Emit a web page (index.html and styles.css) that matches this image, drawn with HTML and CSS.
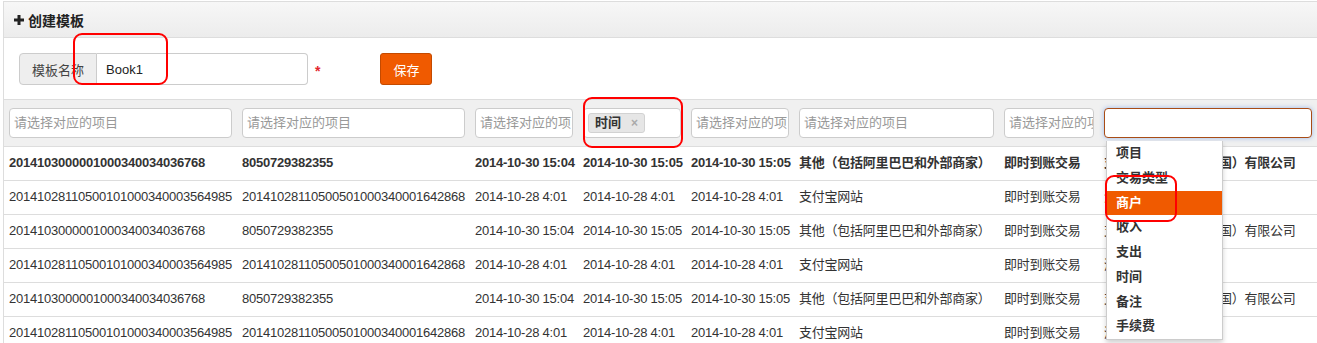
FILE: index.html
```html
<!DOCTYPE html>
<html lang="zh-CN">
<head>
    <meta charset="UTF-8">
    <meta name="viewport" content="width=device-width, initial-scale=1.0">
    <title>创建模板</title>
    <link rel="stylesheet" href="styles.css">
</head>
<body>
    <div class="panel">
        <div class="panel-heading">
            <svg class="icon-plus" width="10" height="10" viewBox="0 0 10 10"><path d="M3.5 0h3v3.5H10v3H6.5V10h-3V6.5H0v-3h3.5z" fill="#222"/></svg>
            <span>创建模板</span>
        </div>
        <div class="panel-body">
            <div class="form-row">
                <div class="input-group">
                    <span class="addon">模板名称</span>
                    <div class="name-input">Book1</div>
                </div>
                <span class="required">*</span>
                <button class="btn-save">保存</button>
            </div>
        </div>

        <table class="grid">
            <colgroup>
                <col style="width:233px">
                <col style="width:233px">
                <col style="width:108px">
                <col style="width:108px">
                <col style="width:108px">
                <col style="width:205px">
                <col style="width:100px">
                <col style="width:218px">
                <col style="width:100px">
            </colgroup>
            <thead>
                <tr class="filters">
                    <th><div class="filter"><span class="ph">请选择对应的项目</span></div></th>
                    <th><div class="filter"><span class="ph">请选择对应的项目</span></div></th>
                    <th><div class="filter"><span class="ph">请选择对应的项目</span></div></th>
                    <th><div class="filter"><span class="tag">时间<span class="tag-x">×</span></span></div></th>
                    <th><div class="filter"><span class="ph">请选择对应的项目</span></div></th>
                    <th><div class="filter"><span class="ph">请选择对应的项目</span></div></th>
                    <th><div class="filter"><span class="ph">请选择对应的项目</span></div></th>
                    <th><div class="filter focused"></div></th>
                    <th><div class="filter"><span class="ph">请选择对应的项目</span></div></th>
                </tr>
            </thead>
            <tbody>
                <tr class="bold">
                    <td>2014103000001000340034036768</td>
                    <td>8050729382355</td>
                    <td>2014-10-30 15:04</td>
                    <td>2014-10-30 15:05</td>
                    <td>2014-10-30 15:05</td>
                    <td>其他（包括阿里巴巴和外部商家）</td>
                    <td>即时到账交易</td>
                    <td>支付宝网络技术（中国）有限公司</td>
                    <td></td>
                </tr>
                <tr>
                    <td>20141028110500101000340003564985</td>
                    <td>20141028110500501000340001642868</td>
                    <td>2014-10-28 4:01</td>
                    <td>2014-10-28 4:01</td>
                    <td>2014-10-28 4:01</td>
                    <td>支付宝网站</td>
                    <td>即时到账交易</td>
                    <td>浙江天猫有限公司</td>
                    <td></td>
                </tr>
                <tr>
                    <td>2014103000001000340034036768</td>
                    <td>8050729382355</td>
                    <td>2014-10-30 15:04</td>
                    <td>2014-10-30 15:05</td>
                    <td>2014-10-30 15:05</td>
                    <td>其他（包括阿里巴巴和外部商家）</td>
                    <td>即时到账交易</td>
                    <td>支付宝网络技术（中国）有限公司</td>
                    <td></td>
                </tr>
                <tr>
                    <td>20141028110500101000340003564985</td>
                    <td>20141028110500501000340001642868</td>
                    <td>2014-10-28 4:01</td>
                    <td>2014-10-28 4:01</td>
                    <td>2014-10-28 4:01</td>
                    <td>支付宝网站</td>
                    <td>即时到账交易</td>
                    <td>浙江天猫有限公司</td>
                    <td></td>
                </tr>
                <tr>
                    <td>2014103000001000340034036768</td>
                    <td>8050729382355</td>
                    <td>2014-10-30 15:04</td>
                    <td>2014-10-30 15:05</td>
                    <td>2014-10-30 15:05</td>
                    <td>其他（包括阿里巴巴和外部商家）</td>
                    <td>即时到账交易</td>
                    <td>支付宝网络技术（中国）有限公司</td>
                    <td></td>
                </tr>
                <tr>
                    <td>20141028110500101000340003564985</td>
                    <td>20141028110500501000340001642868</td>
                    <td>2014-10-28 4:01</td>
                    <td>2014-10-28 4:01</td>
                    <td>2014-10-28 4:01</td>
                    <td>支付宝网站</td>
                    <td>即时到账交易</td>
                    <td>浙江天猫有限公司</td>
                    <td></td>
                </tr>
            </tbody>
        </table>

        <ul class="dropdown">
            <li>项目</li>
            <li>交易类型</li>
            <li class="active">商户</li>
            <li>收入</li>
            <li>支出</li>
            <li>时间</li>
            <li>备注</li>
            <li>手续费</li>
        </ul>

        <span class="mark mark-name"></span>
        <span class="mark mark-tag"></span>
        <span class="mark mark-item"></span>
    </div>
</body>
</html>
```

FILE: styles.css
```css
html, body {
    margin: 0;
    overflow: hidden;
    background: #fff;
}

body {
    font-family: "Liberation Sans", "Noto Sans CJK SC", sans-serif;
    font-size: 13px;
    color: #333;
}

.panel {
    position: relative;
    width: 1420px;
    margin: 1px 0 0 3px;
    border: 1px solid #ddd;
    border-right: none;
    background: #fff;
}

.panel-heading {
    display: flex;
    align-items: center;
    height: 35px;
    padding-left: 10px;
    border-bottom: 1px solid #ddd;
    background: linear-gradient(#f7f7f7, #ececec);
    font-size: 14px;
    font-weight: bold;
    color: #222;
}

.icon-plus {
    margin-right: 4px;
}

.panel-body {
    padding: 15px 15px 14px;
}

.form-row {
    display: flex;
    align-items: center;
}

.input-group {
    display: flex;
    width: 289px;
    height: 32px;
}

.addon {
    display: flex;
    align-items: center;
    padding: 0 12px;
    border: 1px solid #ccc;
    border-radius: 4px 0 0 4px;
    background: #eee;
    color: #444;
}

.name-input {
    flex: 1;
    display: flex;
    align-items: center;
    padding-left: 9px;
    border: 1px solid #ccc;
    border-left: none;
    border-radius: 0 4px 4px 0;
    color: #222;
}

.required {
    margin-left: 7px;
    margin-top: 4px;
    color: #e3262e;
    font-weight: bold;
    font-size: 14px;
}

.btn-save {
    margin-left: 60px;
    width: 52px;
    height: 32px;
    border: 1px solid #c44a00;
    border-radius: 3px;
    background: #f05a00;
    color: #fff;
    font-family: inherit;
    font-size: 13px;
}

.grid {
    table-layout: fixed;
    width: 1413px;
    border-collapse: collapse;
    border-top: 1px solid #ddd;
}

.grid th,
.grid td {
    padding: 6px 5px 7px;
    line-height: 20px;
    text-align: left;
    white-space: nowrap;
    overflow: hidden;
    border-bottom: 1px solid #ddd;
}

.grid td {
    letter-spacing: -0.23px;
}

.filters th {
    padding: 8px 5px;
    background: #f0f0f0;
    font-weight: normal;
}

.filter {
    display: flex;
    align-items: center;
    height: 28px;
    padding: 0 4px;
    border: 1px solid #ccc;
    border-radius: 4px;
    background: #fff;
    overflow: hidden;
}

.ph {
    color: #999;
    white-space: nowrap;
}

.filter.focused {
    border-color: #a84c16;
    box-shadow: 0 0 5px rgba(102, 150, 233, 0.6);
}

.tag {
    display: flex;
    align-items: center;
    height: 18px;
    padding: 0 6px 0 6px;
    border: 1px solid #d2d2d2;
    border-radius: 3px;
    background: #e6e6e6;
    font-weight: bold;
    color: #333;
}

.tag-x {
    margin-left: 10px;
    color: #aaa;
    font-size: 12px;
}

.bold td {
    font-weight: bold;
}

.dropdown {
    position: absolute;
    left: 1102px;
    top: 139px;
    width: 115px;
    margin: 0;
    padding: 0;
    list-style: none;
    background: #fff;
    border: 1px solid #ccc;
    border-top: none;
    box-shadow: 0 3px 5px rgba(0, 0, 0, 0.18);
}

.dropdown li {
    height: 24.75px;
    line-height: 24.75px;
    padding-left: 9px;
    font-weight: bold;
    color: #333;
}

.dropdown li.active {
    background: #f05a00;
    color: #fff;
}

.mark {
    position: absolute;
    border: 2px solid #f00;
    border-radius: 9px;
}

.mark-name {
    left: 69px;
    top: 31px;
    width: 91px;
    height: 48px;
}

.mark-tag {
    left: 579px;
    top: 95px;
    width: 96px;
    height: 47px;
}

.mark-item {
    left: 1101px;
    top: 173px;
    width: 68px;
    height: 43px;
}
```
